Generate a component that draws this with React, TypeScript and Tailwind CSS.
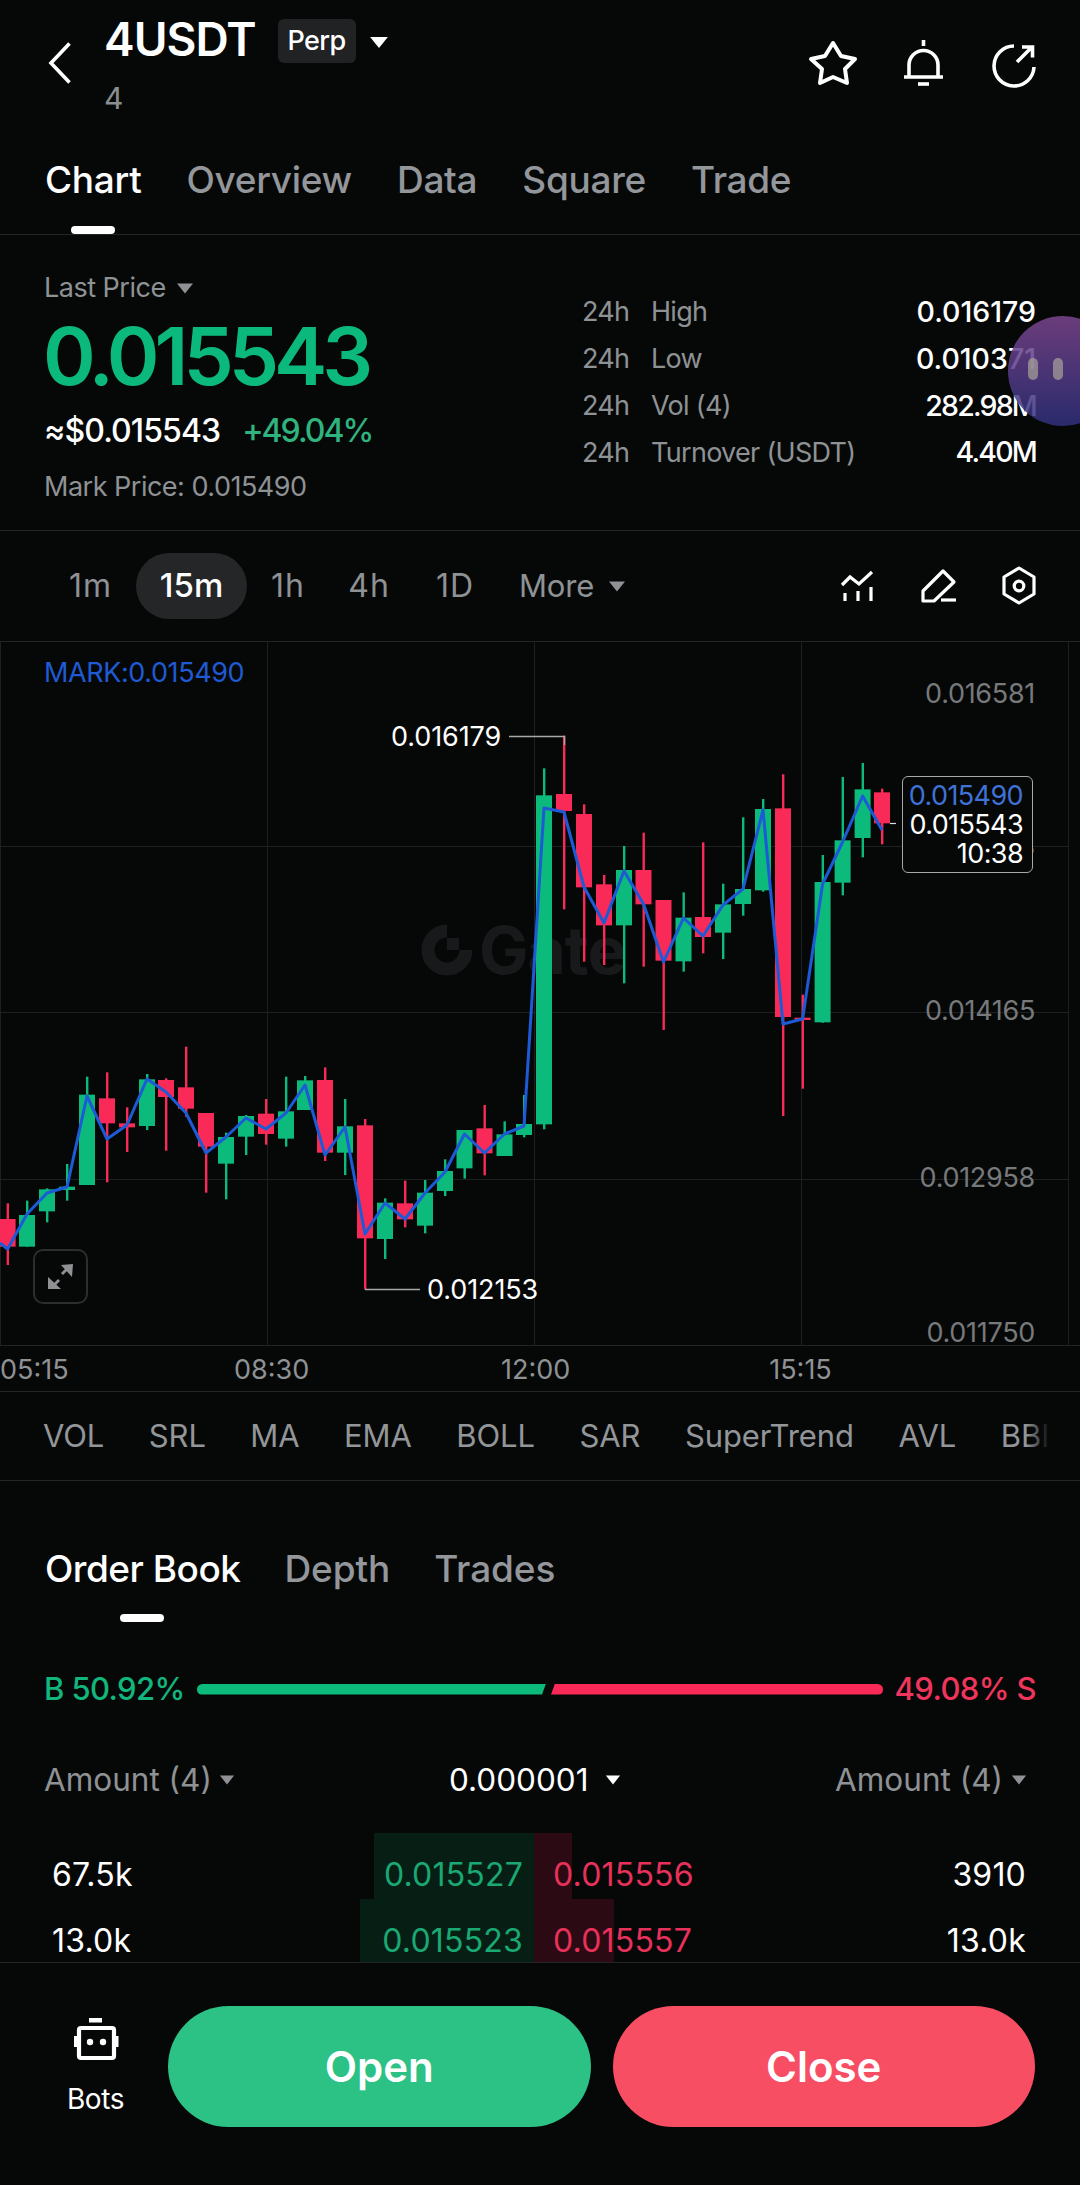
const font = "font-['Inter','Liberation_Sans',sans-serif]";

// [x, wickTop, wickBottom, bodyTop, bodyBottom, up]
type Candle = [number, number, number, number, number, boolean];

const leftCandles: Candle[] = [
  [7.6, 550, 735, 597, 680, false],
  [27, 542, 680, 585, 680, true],
  [47, 505, 607, 508, 574, true],
  [67, 432, 542, 500, 510, true],
  [87, 170, 495, 224, 495, true],
  [107, 157, 487, 235, 310, false],
  [127, 262, 396, 310, 322, false],
  [147, 162, 330, 178, 318, true],
  [166, 175, 392, 180, 231, false],
  [186, 80, 290, 202, 266, false],
  [206, 280, 518, 279, 380, false],
  [226, 338, 538, 351, 431, true],
  [246, 285, 405, 288, 350, true],
  [266, 237, 374, 281, 342, false],
  [286, 170, 380, 274, 356, true],
  [305, 168, 270, 181, 270, true],
  [325, 142, 423, 180, 398, false],
  [345, 237, 465, 319, 398, true],
  [365, 297, 808, 316, 655, false],
  [385, 535, 717, 548, 657, true],
  [405, 482, 622, 550, 598, false],
  [425, 480, 640, 518, 617, true],
  [445, 418, 528, 453, 513, true],
  [464.5, 330, 476, 330, 445, true],
  [484.5, 255, 466, 325, 400, false],
  [504.5, 304, 408, 343, 408, true],
  [524, 225, 352, 312, 345, true],
];

const rightCandles: Candle[] = [
  [544, 205, 1288, 286, 1273, true],
  [564, 107, 628, 282, 333, false],
  [584, 313, 785, 342, 562, false],
  [604, 525, 795, 553, 676, false],
  [624, 438, 850, 510, 676, true],
  [643.5, 398, 800, 510, 613, false],
  [663.5, 600, 990, 600, 782, false],
  [683.5, 577, 815, 653, 784, true],
  [703, 427, 760, 651, 711, false],
  [723, 551, 777, 613, 698, true],
  [743, 352, 647, 567, 612, true],
  [763, 297, 575, 327, 571, true],
  [783, 223, 1248, 325, 951, false],
  [802.6, 884, 1166, 953, 960, false],
  [822.6, 465, 968, 546, 967, true],
  [842.6, 231, 586, 421, 548, true],
  [862.6, 189, 472, 268, 414, true],
  [882, 266, 433, 277, 370, false],
];

const markLine: [number, number][] = [
  [0, 1243],
  [7.6, 1249],
  [27, 1214],
  [47, 1193],
  [67, 1187],
  [87, 1096],
  [107, 1139],
  [127, 1125],
  [147, 1079],
  [166, 1092],
  [186, 1113],
  [206, 1153],
  [226, 1137],
  [246, 1118],
  [266, 1129],
  [286, 1113],
  [305, 1085],
  [325, 1155],
  [345, 1127],
  [365, 1234],
  [385, 1203],
  [405, 1219],
  [425, 1193],
  [445, 1172],
  [464.5, 1134],
  [484.5, 1153],
  [504.5, 1134],
  [524, 1126],
  [544, 808],
  [564, 812],
  [584, 887],
  [604, 923],
  [624, 871],
  [643.5, 904],
  [663.5, 962],
  [683.5, 918],
  [703, 936],
  [723, 905],
  [743, 889],
  [763, 810],
  [783, 1024],
  [802.6, 1019],
  [822.6, 884],
  [842.6, 842],
  [862.6, 796],
  [882, 830],
];

function CandleMark({ c, base }: { c: Candle; base: number }) {
  const [x, wt, wb, bt, bb, up] = c;
  const color = up ? "#0cba7c" : "#fa2a58";
  return (
    <g fill={color}>
      <rect x={x - 1} y={base + wt / 3} width={2.4} height={(wb - wt) / 3} />
      <rect x={x - 8} y={base + bt / 3} width={16} height={Math.max((bb - bt) / 3, 2)} />
    </g>
  );
}

function Caret({ color = "#8f9294", w = 18, h = 11 }: { color?: string; w?: number; h?: number }) {
  return (
    <svg width={w} height={h} viewBox="0 0 18 11">
      <path d="M1 0.5h16L9 10.5z" fill={color} />
    </svg>
  );
}

function Header() {
  return (
    <div className="relative h-[124px] shrink-0">
      <div className="flex items-start">
        <svg className="mt-[42px] ml-[48px]" width="24" height="42" viewBox="0 0 24 42" fill="none">
          <path d="M21.5 1.5L3 21l18.5 19.5" stroke="#fff" strokeWidth="3.6" />
        </svg>
        <div className="ml-[32px] pt-[14px]">
          <div className="flex items-start">
            <span className="text-[46px] leading-[50px] font-semibold text-white tracking-[-1px]">4USDT</span>
            <span className="ml-[22px] mt-[5px] flex h-[44px] w-[78px] items-center justify-center rounded-[6px] bg-[#202224] text-[27px] font-medium tracking-[-0.6px] text-white">
              Perp
            </span>
            <span className="ml-[13px] mt-[22px]">
              <Caret color="#fff" w={20} h={13} />
            </span>
          </div>
          <div className="mt-[17px] text-[30px] leading-[34px] text-[#8b8e90]">4</div>
        </div>
        <div className="ml-auto mr-[41px] mt-[38px] flex items-start">
          <svg className="mt-[2px]" width="50" height="46" viewBox="10 10 50 46" fill="none" stroke="#fff" strokeWidth="4" strokeLinejoin="round">
            <path d="M35 13l8 13 14 3-10 10 2 14-14-6-13 6 2-14-11-10 14-3z" />
          </svg>
          <svg className="ml-[41px]" width="50" height="50" viewBox="100 8 50 50" fill="none" stroke="#fff" strokeWidth="3.6">
            <path d="M110 47V35a14.5 14.5 0 0 1 29 0v12" />
            <path d="M105 47h39M124.5 10v6" />
            <path d="M119 54h11" />
          </svg>
          <svg className="ml-[40px] mt-[2px]" width="50" height="50" viewBox="188 10 50 50" fill="none" stroke="#fff" strokeWidth="3.6">
            <path d="M213 16a20 20 0 1 0 20 21" />
            <path d="M216 32l14-14M221 17h10.5v10.5" />
          </svg>
        </div>
      </div>
    </div>
  );
}

function Tabs() {
  const tabs = ["Overview", "Data", "Square", "Trade"];
  return (
    <div className="flex h-[111px] shrink-0 items-start border-b border-[#222426] pl-[45px] pt-[34px]">
      <div className="relative">
        <span className="text-[37px] leading-[44px] font-medium tracking-[-0.3px] text-white">Chart</span>
        <div className="absolute left-[26px] top-[68px] h-[8px] w-[44px] rounded-full bg-white" />
      </div>
      {tabs.map((t) => (
        <span key={t} className="ml-[45px] text-[37px] leading-[44px] font-medium tracking-[-0.3px] text-[#93969a]">
          {t}
        </span>
      ))}
    </div>
  );
}

function Stat({ label, value, tight }: { label: string; value: string; tight?: boolean }) {
  return (
    <div className="flex h-[46.8px] items-center text-[27px] tracking-[-0.7px]">
      <span className="w-[69px] text-[#8f9294]">24h</span>
      <span className="text-[#8f9294]">{label}</span>
      <span className={tight ? "ml-auto text-[28.5px] font-medium tracking-[-1.8px] text-white" : "ml-auto text-[28.5px] font-medium tracking-[0px] text-white"}>{value}</span>
    </div>
  );
}

function PriceBlock() {
  return (
    <div className="flex h-[296px] shrink-0 border-b border-[#222426] px-[44px]">
      <div className="w-[538px] pt-[34px]">
        <div className="flex h-[38px] items-center text-[27px] tracking-[-0.5px] text-[#8f9294]">
          Last Price
          <span className="ml-[10px]">
            <Caret />
          </span>
        </div>
        <div className="mt-[4px] -ml-[1px] text-[80px] leading-[90px] font-semibold tracking-[-5px] text-[#0cb97d]">0.015543</div>
        <div className="mt-[9px] flex h-[42px] items-center text-[32px] tracking-[-0.9px]">
          <span className="font-medium text-white">≈$0.015543</span>
          <span className="ml-[22px] font-medium tracking-[-2px] text-[#2fb37f]">+49.04%</span>
        </div>
        <div className="mt-[15px] text-[27px] leading-[40px] tracking-[-0.5px] text-[#8f9294]">Mark Price: 0.015490</div>
      </div>
      <div className="flex-1 pt-[54px]">
        <Stat label="High" value="0.016179" />
        <Stat label="Low" value="0.010371" />
        <Stat label="Vol (4)" value="282.98M" tight />
        <Stat label="Turnover (USDT)" value="4.40M" tight />
      </div>
    </div>
  );
}

function Intervals() {
  return (
    <div className="flex h-[111px] shrink-0 items-center border-b border-[#222426] pl-[45px] pr-[42px] text-[32px] tracking-[1px] text-[#8f9294]">
      <span className="w-[91px] text-center">1m</span>
      <span className="flex h-[66px] w-[111px] items-center justify-center rounded-[33px] bg-[#242628] text-[33px] font-medium tracking-[0px] text-white">15m</span>
      <span className="w-[82px] text-center">1h</span>
      <span className="w-[80px] text-center">4h</span>
      <span className="w-[92px] text-center">1D</span>
      <span className="ml-[18px] flex items-center text-[31px] tracking-[-0.2px]">
        More
        <span className="ml-[14px]">
          <Caret />
        </span>
      </span>
      <div className="ml-auto flex items-center">
        <svg width="36" height="36" viewBox="10 8 36 36" fill="none" stroke="#fff" strokeWidth="3.2">
          <path d="M13 25l8-8 9 7 13-12" />
          <path d="M16 33v8M29 31v10M42 27v14" />
        </svg>
        <svg className="ml-[45px]" width="38" height="38" viewBox="90 6 38 38" fill="none" stroke="#fff" strokeWidth="3.2" strokeLinejoin="round">
          <path d="M113 10l11 11-20 19H93V30z" />
          <path d="M111 39h15" />
        </svg>
        <svg className="ml-[42px]" width="38" height="40" viewBox="170 7 38 40" fill="none" stroke="#fff" strokeWidth="3.2" strokeLinejoin="round">
          <path d="M189 9l15 9v17l-15 9-15-9V18z" />
          <circle cx="189" cy="27" r="4.8" />
        </svg>
      </div>
    </div>
  );
}

function PriceLabel({ text, top }: { text: string; top: number }) {
  return (
    <span className="absolute right-[45px] text-[27px] leading-[32px] tracking-[-0.3px] text-[#77797b]" style={{ top: top - 15 }}>
      {text}
    </span>
  );
}

function Chart() {
  const gridX = [0, 267, 534, 801, 1068];
  const gridY = [846, 1012, 1179];
  const line = markLine.map((p) => p.join(",")).join(" ");
  return (
    <div className="relative h-[704px] shrink-0 border-b border-[#222426]">
      {/* watermark */}
      <div className="absolute left-[421px] top-[282px] flex items-center">
        <svg width="52" height="52" viewBox="0 0 52 52" fill="none">
          <path d="M26 7a19 19 0 1 0 19 19" stroke="#18191a" strokeWidth="13" />
          <rect x="26" y="14" width="12" height="12" fill="#18191a" />
        </svg>
        <span className="ml-[6px] text-[66px] leading-[52px] font-bold tracking-[-1px] text-[#18191a]">Gate</span>
      </div>
      <svg className="absolute inset-0" width="1080" height="703" viewBox="0 642 1080 703">
        {gridX.map((x) => (
          <line key={x} x1={x + 0.5} y1={642} x2={x + 0.5} y2={1345} stroke="#1d1f20" />
        ))}
        {gridY.map((y) => (
          <line key={y} x1={0} y1={y + 0.5} x2={1069} y2={y + 0.5} stroke="#1d1f20" />
        ))}
        {leftCandles.map((c) => (
          <CandleMark key={c[0]} c={c} base={1020} />
        ))}
        {rightCandles.map((c) => (
          <CandleMark key={c[0]} c={c} base={700} />
        ))}
        <polyline points={line} fill="none" stroke="#1c5ad6" strokeWidth="3" strokeLinejoin="round" />
        <path d="M509 736.5h55.5V745" fill="none" stroke="#a8a8a8" strokeWidth="1.4" />
        <path d="M365 1289.5h55" fill="none" stroke="#a8a8a8" strokeWidth="1.4" />
        <path d="M890 823.5h6" stroke="#ddd" strokeWidth="1.2" />
      </svg>

      <span className="absolute left-[44px] top-[15px] text-[27px] leading-[32px] tracking-[-0.4px] text-[#1f5ad4]">MARK:0.015490</span>
      <span className="absolute left-[391px] top-[79px] text-[27px] leading-[32px] tracking-[-0.1px] text-white">0.016179</span>
      <span className="absolute left-[427px] top-[632px] text-[27px] leading-[32px] tracking-[-0.1px] text-white">0.012153</span>

      <PriceLabel text="0.016581" top={51} />
      <PriceLabel text="0.015373" top={204} />
      <PriceLabel text="0.014165" top={368} />
      <PriceLabel text="0.012958" top={535} />
      <PriceLabel text="0.011750" top={690} />

      <div className="absolute left-[902px] top-[134px] flex h-[97px] w-[131px] flex-col items-end rounded-[6px] border border-[#a8a8a8] bg-[#060808] pr-[9px] pt-[4px] text-[27px] leading-[29px] tracking-[-0.6px]">
        <span className="text-[#3f72d6]">0.015490</span>
        <span className="text-white">0.015543</span>
        <span className="text-white">10:38</span>
      </div>

      <div className="absolute left-[33px] top-[607px] flex h-[55px] w-[55px] items-center justify-center rounded-[10px] border-2 border-[#2b2d2f]">
        <svg width="30" height="30" viewBox="26 22 30 30" fill="#8f9193">
          <path d="M41 25l12-1-1 13zM28 37v12h13z" />
          <path d="M48 30l-5 5-2-2 5-5z" />
          <path d="M33 44l5-5 2 2-5 5z" />
        </svg>
      </div>
    </div>
  );
}

function TimeAxis() {
  return (
    <div className="flex h-[46px] shrink-0 items-center border-b border-[#222426] pt-[4px] text-[27px] text-[#8f9294]">
      <span className="w-[65px] whitespace-nowrap">05:15</span>
      <span className="ml-[169px] w-[65px] whitespace-nowrap text-center">08:30</span>
      <span className="ml-[202px] w-[65px] whitespace-nowrap text-center">12:00</span>
      <span className="ml-[202px] w-[65px] whitespace-nowrap text-center">15:15</span>
    </div>
  );
}

function Indicators() {
  const items = ["VOL", "SRL", "MA", "EMA", "BOLL", "SAR", "SuperTrend", "AVL", "BBI"];
  return (
    <div className="relative flex h-[89px] shrink-0 items-center gap-[44.5px] overflow-hidden border-b border-[#222426] pl-[43px] text-[31px] tracking-[-0.1px] text-[#939699]">
      {items.map((i) => (
        <span key={i} className="shrink-0">
          {i}
        </span>
      ))}
      <div className="absolute inset-y-0 left-[1049px] w-[31px] bg-[#060808]" />
      <div className="absolute inset-y-0 left-[1026px] w-[24px] bg-gradient-to-r from-transparent to-[#060808]" />
    </div>
  );
}

function BookTabs() {
  return (
    <div className="flex h-[178px] shrink-0 items-start pl-[45px] pt-[66px]">
      <div className="relative">
        <span className="text-[37px] leading-[44px] font-medium tracking-[-0.5px] text-white">Order Book</span>
        <div className="absolute left-[75px] top-[67px] h-[8px] w-[44px] rounded-full bg-white" />
      </div>
      <span className="ml-[44px] text-[37px] leading-[44px] font-medium tracking-[-0.1px] text-[#93969a]">Depth</span>
      <span className="ml-[44px] text-[37px] leading-[44px] font-medium tracking-[-0.1px] text-[#93969a]">Trades</span>
    </div>
  );
}

function Ratio() {
  return (
    <div className="flex h-[60px] shrink-0 items-center px-[44px] text-[31px] font-medium tracking-[-0.6px]">
      <span className="w-[153px] whitespace-nowrap text-[#12b57c]">B 50.92%</span>
      <div className="h-[11px] w-[349px] rounded-l-full bg-[#0cba7c] [clip-path:polygon(0_0,100%_0,calc(100%-4px)_100%,0_100%)]" />
      <div className="ml-[5px] h-[11px] w-[332px] rounded-r-full bg-[#fa2a58] [clip-path:polygon(4px_0,100%_0,100%_100%,0_100%)]" />
      <span className="ml-auto whitespace-nowrap text-[#f0355d]">49.08% S</span>
    </div>
  );
}

function AmountHead() {
  return (
    <div className="flex h-[114px] shrink-0 items-center px-[44px] pt-[8px] text-[31.5px] text-[#8f9294]">
      <span className="whitespace-nowrap">Amount (4)</span>
      <span className="ml-[7px]">
        <Caret w={16} h={10} />
      </span>
      <span className="ml-[214px] text-white">0.000001</span>
      <span className="ml-[17px]">
        <Caret color="#fff" w={16} h={10} />
      </span>
      <span className="ml-auto whitespace-nowrap">Amount (4)</span>
      <span className="ml-[8px] mr-[9px]">
        <Caret w={16} h={10} />
      </span>
    </div>
  );
}

function BookRow({ bid, bp, ask, ap, bw, aw }: { bid: string; bp: string; ask: string; ap: string; bw: number; aw: number }) {
  return (
    <div className="flex h-[66px] shrink-0 items-center text-[32px] tracking-[0.2px]">
      <div className="relative flex h-full w-[534px] items-center justify-between pl-[52px] pr-[11px] pt-[18px]">
        <div className="absolute inset-y-0 right-0 bg-[#071e15]" style={{ width: bw }} />
        <span className="relative text-white">{bid}</span>
        <span className="relative text-[#1aa873]">{bp}</span>
      </div>
      <div className="relative flex h-full flex-1 items-center justify-between pl-[19px] pr-[54px] pt-[18px]">
        <div className="absolute inset-y-0 left-0 bg-[#2c0a13]" style={{ width: aw }} />
        <span className="relative text-[#e8315a]">{ap}</span>
        <span className="relative text-white">{ask}</span>
      </div>
    </div>
  );
}

function Footer() {
  return (
    <div className="flex h-[223px] shrink-0 border-t border-[#222426] pl-[67px] pr-[45px] pt-[43px]">
      <div className="flex w-[57px] flex-col items-center pt-[11px]">
        <svg width="48" height="48" viewBox="20 13 48 48" fill="none">
          <rect x="37" y="14" width="13" height="4.5" fill="#fff" />
          <rect x="27" y="24" width="35" height="30" rx="2" stroke="#fff" strokeWidth="4.2" />
          <rect x="22" y="32" width="3.5" height="11" fill="#fff" />
          <rect x="63" y="32" width="3.5" height="11" fill="#fff" />
          <circle cx="38" cy="38" r="3.2" fill="#fff" />
          <circle cx="51" cy="38" r="3.2" fill="#fff" />
        </svg>
        <span className="mt-[18px] text-[28px] leading-[32px] tracking-[-0.4px] text-white">Bots</span>
      </div>
      <button className="ml-[44px] h-[121px] w-[423px] rounded-full bg-[#2cc185] text-[42px] font-semibold text-white">Open</button>
      <button className="ml-[22px] h-[121px] w-[423px] rounded-full bg-[#f74e64] text-[42px] font-semibold text-white">Close</button>
    </div>
  );
}

export default function App() {
  return (
    <div className={`relative flex h-[2185px] w-[1080px] flex-col overflow-hidden bg-[#060808] ${font}`}>
      <Header />
      <Tabs />
      <PriceBlock />
      <Intervals />
      <Chart />
      <TimeAxis />
      <Indicators />
      <BookTabs />
      <Ratio />
      <AmountHead />
      <div className="flex h-[129px] shrink-0 flex-col overflow-hidden">
        <BookRow bid="67.5k" bp="0.015527" ap="0.015556" ask="3910" bw={160} aw={38} />
        <BookRow bid="13.0k" bp="0.015523" ap="0.015557" ask="13.0k" bw={174} aw={80} />
      </div>
      <Footer />
      {/* floating assistant bubble */}
      <div className="absolute left-[1008px] top-[316px] h-[110px] w-[110px] rounded-full bg-gradient-to-b from-[#7d4590]/85 to-[#30307e]/85">
        <div className="absolute left-[20px] top-[42px] h-[22px] w-[10px] rounded-full bg-[#a8a49a]/70" />
        <div className="absolute left-[45px] top-[42px] h-[22px] w-[10px] rounded-full bg-[#a8a49a]/70" />
      </div>
    </div>
  );
}
